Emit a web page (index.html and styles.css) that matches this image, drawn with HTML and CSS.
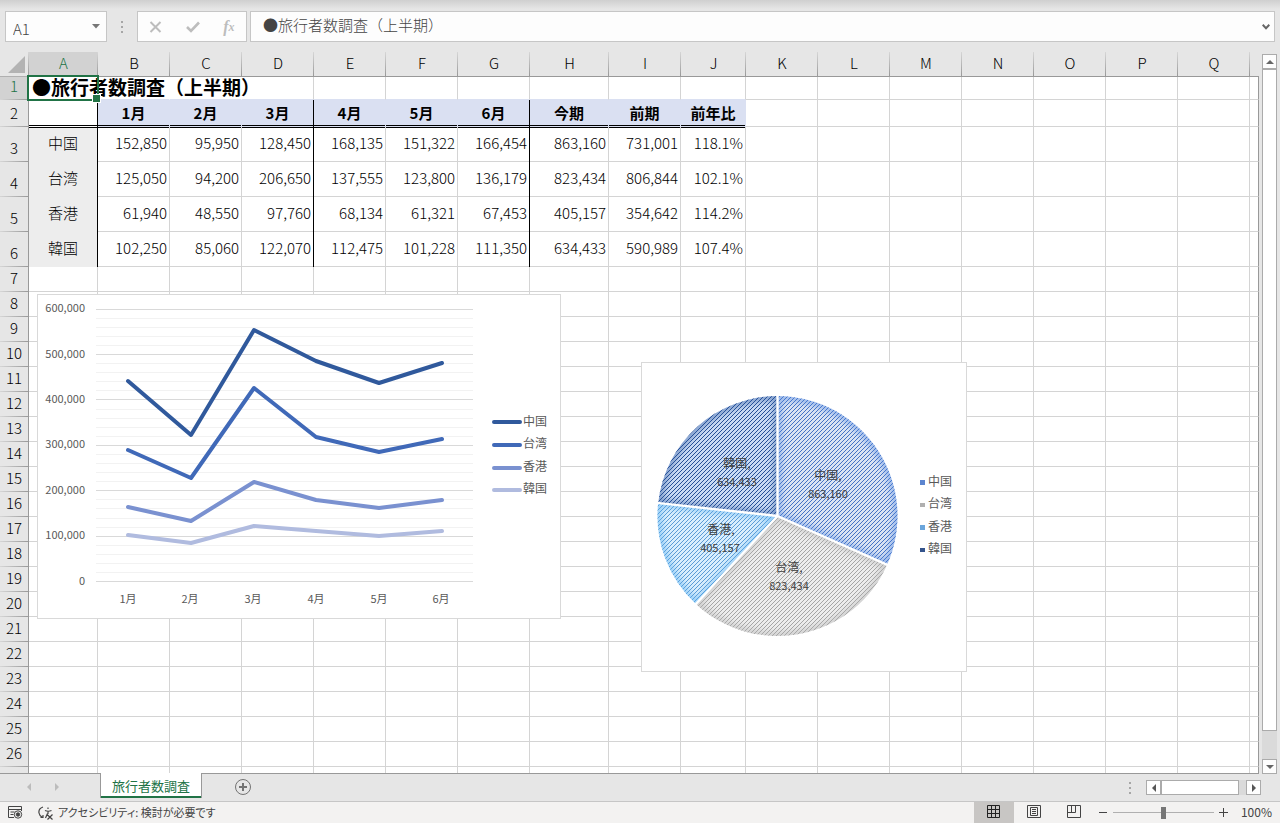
FILE: index.html
```html
<!DOCTYPE html>
<html lang="ja">
<head>
<meta charset="utf-8">
<title>旅行者数調査</title>
<link rel="stylesheet" href="styles.css">
</head>
<body>
<div class="app">
  <header class="formula-bar">
    <div class="name-box">
      <input class="name-input" type="text" value="A1" aria-label="名前ボックス">
      <button class="icon-button name-toggle" type="button" aria-label="名前の一覧">
        <svg width="8" height="5" viewBox="0 0 8 5"><path d="M0 0h8L4 4.500z" fill="#777"/></svg>
      </button>
    </div>
    <svg class="grip" width="3" height="12" viewBox="0 0 3 12" fill="#a6a6a6"><path d="M0 0h2v2H0zM0 5h2v2H0zM0 10h2v2H0z"/></svg>
    <div class="edit-tools">
      <button class="icon-button" type="button" aria-label="キャンセル">
        <svg width="14" height="12" viewBox="0 0 14 12" fill="none" stroke="#bdbdbd" stroke-width="2"><path d="M1.500 1l10 10M11.500 1l-10 10"/></svg>
      </button>
      <button class="icon-button" type="button" aria-label="入力">
        <svg width="14" height="12" viewBox="0 0 14 12" fill="none" stroke="#bdbdbd" stroke-width="2.600"><path d="M1 6l4 4 8-8.500"/></svg>
      </button>
      <button class="icon-button fx" type="button" aria-label="関数の挿入"><i>f</i><small>x</small></button>
    </div>
    <div class="formula">
      <input class="formula-input" type="text" value="●旅行者数調査（上半期）" aria-label="数式バー">
      <button class="icon-button expand" type="button" aria-label="数式バーの展開">
        <svg width="8" height="6" viewBox="0 0 8 6" fill="none" stroke="#666" stroke-width="2"><path d="M.7.800L4 4.200 7.300.800"/></svg>
      </button>
    </div>
  </header>

  <main class="workspace">
    <div class="sheet" id="sheet">
      <table class="grid" id="grid">
        <colgroup>
          <col class="c-head"><col class="c-a">
          <col class="c-std"><col class="c-std"><col class="c-std"><col class="c-std"><col class="c-std"><col class="c-std">
          <col class="c-h"><col class="c-std"><col class="c-j">
          <col class="c-std"><col class="c-std"><col class="c-std"><col class="c-std"><col class="c-std"><col class="c-std"><col class="c-std">
          <col>
        </colgroup>
        <thead></thead>
        <tbody></tbody>
      </table>

      <svg class="chart line-chart" viewBox="37 294 524 325" role="img" aria-label="月別旅行者数の折れ線グラフ">
        <rect x="37.500" y="294.500" width="523" height="324" fill="#fff" stroke="#d9d9d9"/>
        <path class="minor" d="M96 318.500h377M96 327.500h377M96 336.500h377M96 345.500h377M96 363.500h377M96 372.500h377M96 381.500h377M96 390.500h377M96 409.500h377M96 418.500h377M96 427.500h377M96 436.500h377M96 454.500h377M96 463.500h377M96 472.500h377M96 481.500h377M96 499.500h377M96 508.500h377M96 518.500h377M96 527.500h377M96 545.500h377M96 554.500h377M96 563.500h377M96 572.500h377"/>
        <path class="major" d="M96 309.500h377M96 354.500h377M96 399.500h377M96 445.500h377M96 490.500h377M96 536.500h377M96 581.500h377"/>
        <g class="axis end">
          <text x="85" y="312">600,000</text><text x="85" y="358">500,000</text><text x="85" y="403">400,000</text><text x="85" y="448">300,000</text><text x="85" y="494">200,000</text><text x="85" y="539">100,000</text><text x="85" y="585">0</text>
        </g>
        <g class="axis mid">
          <text x="128" y="603">1月</text><text x="190" y="603">2月</text><text x="253" y="603">3月</text><text x="316" y="603">4月</text><text x="379" y="603">5月</text><text x="441" y="603">6月</text>
        </g>
        <g class="series">
          <path stroke="#b0bbdf" d="M128 535l63 8 63-17 62 5 63 5 63-5M494 490h26"/>
          <path stroke="#7a91d0" d="M128 507l63 14 63-39 62 18 63 8 63-8M494 468h26"/>
          <path stroke="#4069b8" d="M128 450l63 28 63-90 62 49 63 15 63-13M494 445h26"/>
          <path stroke="#30599c" d="M128 381l63 54 63-105 62 31 63 22 63-20M494 422h26"/>
        </g>
        <g class="legend">
          <text x="523" y="426">中国</text><text x="523" y="448">台湾</text><text x="523" y="471">香港</text><text x="523" y="493">韓国</text>
        </g>
      </svg>

      <svg class="chart pie-chart" viewBox="641 362 326 310" role="img" aria-label="国別旅行者数の円グラフ">
        <defs>
          <pattern id="h1" width="4" height="4" patternUnits="userSpaceOnUse"><path d="M0 0h4v4H0z" fill="#dae3f3"/><path d="M-1 1l2-2M0 4l4-4M3 5l2-2" stroke="#4472c4"/></pattern>
          <pattern id="h2" width="4" height="4" patternUnits="userSpaceOnUse"><path d="M0 0h4v4H0z" fill="#ededed"/><path d="M-1 1l2-2M0 4l4-4M3 5l2-2" stroke="#a5a5a5"/></pattern>
          <pattern id="h3" width="4" height="4" patternUnits="userSpaceOnUse"><path d="M0 0h4v4H0z" fill="#d9eefd"/><path d="M-1 1l2-2M0 4l4-4M3 5l2-2" stroke="#5b9bd5"/></pattern>
          <pattern id="h4" width="4" height="4" patternUnits="userSpaceOnUse"><path d="M0 0h4v4H0z" fill="#c9daf4"/><path d="M-1 1l2-2M0 4l4-4M3 5l2-2" stroke="#264f96"/></pattern>
          <path id="s1" d="M777.500 516V396A120 120 0 0 1 887.100 564.800z"/>
          <path id="s2" d="M777.500 516L887.100 564.800A120 120 0 0 1 696.100 604.200z"/>
          <path id="s3" d="M777.500 516L696.100 604.200A120 120 0 0 1 658.200 503z"/>
          <path id="s4" d="M777.500 516L658.200 503A120 120 0 0 1 777.500 396z"/>
          <clipPath id="k1"><use href="#s1"/></clipPath>
          <clipPath id="k2"><use href="#s2"/></clipPath>
          <clipPath id="k3"><use href="#s3"/></clipPath>
          <clipPath id="k4"><use href="#s4"/></clipPath>
          <filter id="soft" color-interpolation-filters="sRGB"><feGaussianBlur stdDeviation="3"/></filter>
        </defs>
        <rect x="641.500" y="362.500" width="325" height="309" fill="#fff" stroke="#d9d9d9"/>
        <use href="#s1" fill="url(#h1)"/><use href="#s2" fill="url(#h2)"/><use href="#s3" fill="url(#h3)"/><use href="#s4" fill="url(#h4)"/>
        <g class="inner-shade">
          <g clip-path="url(#k1)"><use href="#s1" stroke="#4f86e0" filter="url(#soft)"/></g>
          <g clip-path="url(#k2)"><use href="#s2" stroke="#b0b0b0" filter="url(#soft)"/></g>
          <g clip-path="url(#k3)"><use href="#s3" stroke="#55aef0" filter="url(#soft)"/></g>
          <g clip-path="url(#k4)"><use href="#s4" stroke="#2f5aa0" filter="url(#soft)"/></g>
        </g>
        <path d="M777.500 395V516L888.500 565.300M777.500 516L695 605M777.500 516L657 502.900" fill="none" stroke="#fff" stroke-width="2.400"/>
        <g class="legend mid pie-label">
          <text x="828" y="480">中国,</text><text x="789" y="572">台湾,</text><text x="721" y="534">香港,</text><text x="737" y="468">韓国,</text>
        </g>
        <g class="axis mid pie-label">
          <text x="828" y="498">863,160</text><text x="789" y="590">823,434</text><text x="720" y="552">405,157</text><text x="737" y="486">634,433</text>
        </g>
        <g>
          <path d="M920 480h5v5h-5z" fill="#5c85cf"/><path d="M920 503h5v4h-5z" fill="#b0b0b0"/><path d="M920 525h5v5h-5z" fill="#6ba6dc"/><path d="M920 548h5v4h-5z" fill="#34548c"/>
        </g>
        <g class="legend">
          <text x="928" y="486">中国</text><text x="928" y="508">台湾</text><text x="928" y="531">香港</text><text x="928" y="553">韓国</text>
        </g>
      </svg>
    </div>

    <div class="vscroll">
      <button class="scroll-button" type="button" aria-label="上へ"><svg width="8" height="4" viewBox="0 0 8 4"><path d="M0 4h8L4 0z" fill="#666"/></svg></button>
      <div class="vtrack"><div class="vthumb"></div></div>
      <button class="scroll-button" type="button" aria-label="下へ"><svg width="8" height="4" viewBox="0 0 8 4"><path d="M0 0h8L4 4z" fill="#666"/></svg></button>
    </div>
  </main>

  <nav class="tab-bar">
    <div class="tab-nav">
      <button class="icon-button" type="button" aria-label="前のシート"><svg width="4" height="8" viewBox="0 0 4 8"><path d="M4 0v8L0 4z" fill="#bcbcbc"/></svg></button>
      <button class="icon-button" type="button" aria-label="次のシート"><svg width="4" height="8" viewBox="0 0 4 8"><path d="M0 0v8l4-4z" fill="#bcbcbc"/></svg></button>
    </div>
    <button class="sheet-tab" type="button">旅行者数調査</button>
    <button class="icon-button add-sheet" type="button" aria-label="新しいシート">
      <svg width="18" height="18" viewBox="0 0 18 18" fill="none" stroke="#737373"><circle cx="9" cy="9" r="7.500"/><path d="M9 5v8M5 9h8" stroke-width="2"/></svg>
    </button>
    <svg class="grip" width="3" height="12" viewBox="0 0 3 12" fill="#a6a6a6"><path d="M0 0h2v2H0zM0 5h2v2H0zM0 10h2v2H0z"/></svg>
    <div class="hscroll">
      <button class="scroll-button" type="button" aria-label="左へ"><svg width="4" height="8" viewBox="0 0 4 8"><path d="M4 0v8L0 4z" fill="#555"/></svg></button>
      <div class="htrack"><div class="hthumb"></div></div>
      <button class="scroll-button" type="button" aria-label="右へ"><svg width="4" height="8" viewBox="0 0 4 8"><path d="M0 0v8l4-4z" fill="#555"/></svg></button>
    </div>
  </nav>

  <footer class="status-bar">
    <button class="icon-button macro" type="button" aria-label="マクロの記録">
      <svg width="15" height="13" viewBox="0 0 15 13" fill="none" stroke="#444"><path d="M6 11.500H.5V.5h13V5M.5 3.500h13M2.500 6h4M2.500 8.500h3"/><circle cx="10" cy="8.500" r="3.700"/><circle cx="10" cy="8.500" r="1.700" fill="#444"/></svg>
    </button>
    <button class="a11y" type="button">
      <svg width="16" height="14" viewBox="0 0 16 14" fill="none" stroke="#444"><path d="M5 1C2 2 .5 4 1 7c.3 2 1.500 3.500 3.500 4.500M2.500 11.500h2.500V9M7 4.500c1.500.7 5 .7 6.500 0M10 1.500v1.500M10 5v3M9.500 7.500L7.500 12M9 8.500l5.500 5M14.500 8.500l-5 5" stroke-width="1.200"/></svg>
      <span>アクセシビリティ: 検討が必要です</span>
    </button>
    <div class="views">
      <button class="view active" type="button" aria-label="標準"><svg width="13" height="13" viewBox="0 0 13 13" fill="none" stroke="#222"><path d="M.5.500h12v12H.5zM4.500.500v12M8.500.500v12M.5 4.500h12M.5 8.500h12"/></svg></button>
      <button class="view" type="button" aria-label="ページ レイアウト"><svg width="14" height="13" viewBox="0 0 14 13" fill="none" stroke="#444"><path d="M.5.500h13v12H.5zM3.500 2.500h7v8h-7zM5 4.500h4M5 6.500h4M5 8.500h4"/></svg></button>
      <button class="view" type="button" aria-label="改ページ プレビュー"><svg width="14" height="13" viewBox="0 0 14 13" fill="none" stroke="#444"><path d="M.5.500h13v12H.5zM.5 7.500h8v-7M4.500.500v7"/></svg></button>
    </div>
    <div class="zoom">
      <button class="icon-button" type="button" aria-label="縮小"><svg width="9" height="9" viewBox="0 0 9 9" stroke="#444"><path d="M0 4.500h8"/></svg></button>
      <input class="zoom-slider" type="range" min="0" max="200" value="100" aria-label="ズーム">
      <button class="icon-button" type="button" aria-label="拡大"><svg width="9" height="9" viewBox="0 0 9 9" stroke="#444"><path d="M0 4.500h9M4.500 0v9"/></svg></button>
      <button class="percent" type="button">100%</button>
    </div>
  </footer>
</div>
<script src="sheet.js"></script>
</body>
</html>
```

FILE: styles.css
```css
* {
  box-sizing: border-box;
}

body {
  margin: 0;
  font-family: "Noto Sans CJK JP", sans-serif;
  font-size: 15px;
  font-weight: 300;
  color: #000;
  background: #e6e6e6;
}

button,
input {
  font: inherit;
  color: inherit;
  margin: 0;
  padding: 0;
  border: 0;
  background: none;
  min-width: 0;
}

svg {
  display: block;
}

.app {
  display: flex;
  flex-direction: column;
  height: 100vh;
}

.icon-button {
  display: flex;
  align-items: center;
  justify-content: center;
}

/* formula bar */
.formula-bar {
  display: flex;
  flex: none;
  height: 52px;
  padding: 11px 5px 10px;
  background: linear-gradient(#cfcfcf, #e6e6e6 9px);
  color: #444;
}

.name-box,
.edit-tools,
.formula {
  display: flex;
  background: #fdfdfd;
  border: 1px solid #c6c6c6;
}

.name-box {
  width: 102px;
}

.name-input {
  flex: 1;
  padding: 3px 0 0 7px;
}

.name-toggle {
  width: 20px;
}

.formula-bar .grip {
  margin: 10px 13px 0 14px;
}

.edit-tools {
  width: 110px;
  justify-content: space-around;
}

.fx {
  font-family: "Liberation Serif", serif;
  font-size: 16px;
  font-weight: 700;
  line-height: 16px;
  color: #bdbdbd;
}

.fx small {
  font-size: 12px;
  font-style: italic;
}

.formula {
  flex: 1;
  margin-left: 3px;
}

.formula-input {
  flex: 1;
  padding: 0 0 4px 12px;
}

.expand {
  width: 16px;
}

/* sheet */
.workspace {
  display: flex;
  flex: 1;
  min-height: 0;
}

.sheet {
  position: relative;
  flex: 1;
  overflow: hidden;
  border-bottom: 1px solid #999;
}

.grid {
  width: 100%;
  table-layout: fixed;
  border-spacing: 0;
  line-height: 20px;
}

.c-head { width: 29px; }
.c-a { width: 69px; }
.c-std { width: 72px; }
.c-h { width: 79px; }
.c-j { width: 65px; }

.grid th,
.grid td {
  height: 25px;
  padding: 0;
  white-space: nowrap;
}

.grid th {
  font-weight: 300;
  background: #e6e6e6;
}

.grid thead th {
  padding-bottom: 2px;
  border-bottom: 1px solid #999;
  background: linear-gradient(#d6d6d6, #999) right / 1px 100% no-repeat #e6e6e6;
}

.grid thead th:last-child {
  background: #e6e6e6;
}

.grid thead .corner {
  padding: 4px 0 0 8px;
  border-bottom-color: #b0b0b0;
  vertical-align: top;
}

.grid thead .current,
.grid tbody .current {
  color: #217346;
  background-color: #d2d2d2;
}

.grid tbody th {
  padding-bottom: 5px;
  border-right: 1px solid #999;
  background: linear-gradient(90deg, #d6d6d6, #999) bottom / 100% 1px no-repeat #e6e6e6;
  line-height: 18px;
  vertical-align: bottom;
}

.grid td {
  padding: 0 2px 2px 0;
  background: #fff;
  border-right: 1px solid #d4d4d4;
  border-bottom: 1px solid #d4d4d4;
  text-align: right;
}

.grid td:last-child {
  border-right-color: #999;
}

.grid .r1 > * { height: 23px; }
.grid .r2 > * { height: 27px; }
.grid .data > * { height: 35px; }

.grid .under-title {
  border-right-color: #fff;
}

.grid .above-header {
  border-bottom-color: #dae0f2;
}

.grid .title {
  position: relative;
  z-index: 1;
  padding-left: 3px;
  font-size: 19px;
  font-weight: 700;
  text-align: left;
}

.selection {
  position: absolute;
  inset: -2px;
  border: 2px solid #217346;
}

.selection::after {
  content: "";
  position: absolute;
  right: -4px;
  bottom: -4px;
  width: 7px;
  height: 7px;
  border: 1px solid #fff;
  background: #217346;
}

.grid .month {
  padding: 0;
  font-weight: 700;
  text-align: center;
  background: #dae0f2;
  border-color: #dae0f2;
  box-shadow: inset 0 -1px #000;
}

.grid .blank {
  background: #fff;
  border-color: #fff;
  box-shadow: inset 0 -1px #000;
}

.grid .country {
  padding: 0 0 2px;
  text-align: center;
  background: #ededed;
  border-bottom-color: #ededed;
}

.grid .ruled {
  box-shadow: inset 0 1px #000;
}

.grid .divider {
  position: relative;
}

.divider::after {
  content: "";
  position: absolute;
  top: 0;
  right: -1px;
  bottom: -1px;
  width: 1px;
  background: #000;
}

/* charts */
.chart {
  position: absolute;
  z-index: 2;
}

.line-chart {
  left: 37px;
  top: 242px;
  width: 524px;
  height: 325px;
}

.pie-chart {
  left: 641px;
  top: 310px;
  width: 326px;
  height: 310px;
}

.minor { stroke: #f2f2f2; }
.major { stroke: #d9d9d9; }

.series {
  fill: none;
  stroke-width: 4px;
  stroke-linecap: round;
  stroke-linejoin: round;
}

.axis,
.legend {
  font-size: 11px;
  font-weight: 400;
  fill: #595959;
}

.legend { font-size: 12px; }
.pie-label { fill: #404040; }
.end { text-anchor: end; }
.mid { text-anchor: middle; }

.inner-shade {
  fill: none;
  stroke-width: 8px;
  opacity: 0.5;
}

/* scroll bars */
.vscroll {
  display: flex;
  flex-direction: column;
  width: 15px;
  margin: 2px 3px 0 3px;
}

.scroll-button {
  display: flex;
  flex: none;
  align-items: center;
  justify-content: center;
  width: 15px;
  height: 15px;
  background: #fdfdfd;
  border: 1px solid #ababab;
}

.vtrack {
  display: flex;
  flex-direction: column;
  flex: 1;
  background: #dadada;
}

.vthumb {
  height: 96%;
  background: #fff;
  border: 1px solid #ababab;
}

.hscroll {
  display: flex;
  margin: 6px 19px 0 14px;
}

.htrack {
  width: 85px;
  background: #dadada;
}

.hthumb {
  width: 78px;
  height: 15px;
  background: #fff;
  border: 1px solid #ababab;
}

/* sheet tabs */
.tab-bar {
  display: flex;
  flex: none;
  align-items: flex-start;
  height: 28px;
  border-bottom: 1px solid #c6c6c6;
}

.tab-nav {
  display: flex;
  gap: 24px;
  width: 100px;
  padding: 9px 0 0 27px;
}

.sheet-tab {
  position: relative;
  height: 25px;
  margin-top: -1px;
  padding: 0 11px;
  font-size: 13px;
  font-weight: 400;
  line-height: 20px;
  color: #217346;
  background: #fff;
  border: solid #999;
  border-width: 0 1px;
  box-shadow: inset 0 -2px #217346;
}

.add-sheet {
  margin: 4px auto 0 32px;
}

.tab-bar .grip {
  margin-top: 8px;
}

/* status bar */
.status-bar {
  display: flex;
  flex: none;
  align-items: center;
  height: 21px;
  padding: 0 8px;
  font-size: 12px;
  font-weight: 400;
  line-height: 18px;
  color: #444;
  background: #f3f2f1;
}

.a11y {
  display: flex;
  align-items: center;
  gap: 4px;
  margin: 0 auto 0 15px;
  font-size: 11px;
  font-feature-settings: "palt";
  white-space: nowrap;
}

.a11y span,
.percent {
  padding-bottom: 2px;
}

.views {
  display: flex;
  height: 100%;
}

.view {
  display: flex;
  align-items: center;
  justify-content: center;
  width: 40px;
  padding-bottom: 2px;
}

.view.active {
  background: #c8c6c4;
}

.zoom {
  display: flex;
  align-items: center;
  gap: 5px;
  margin-left: 5px;
}

.zoom-slider {
  width: 101px;
  height: 12px;
  appearance: none;
}

.zoom-slider::-webkit-slider-runnable-track {
  height: 12px;
  background: linear-gradient(#b0b0b0, #b0b0b0) center / 100% 1px no-repeat;
}

.zoom-slider::-webkit-slider-thumb {
  appearance: none;
  width: 5px;
  height: 12px;
  background: #767676;
}

.percent {
  margin-left: 8px;
}
```

FILE: sheet.js
```js
const columns = "ABCDEFGHIJKLMNOPQ".split("");
const months = ["", "1月", "2月", "3月", "4月", "5月", "6月", "今期", "前期", "前年比"];
const data = [
  ["中国", "152,850", "95,950", "128,450", "168,135", "151,322", "166,454", "863,160", "731,001", "118.1%"],
  ["台湾", "125,050", "94,200", "206,650", "137,555", "123,800", "136,179", "823,434", "806,844", "102.1%"],
  ["香港", "61,940", "48,550", "97,760", "68,134", "61,321", "67,453", "405,157", "354,642", "114.2%"],
  ["韓国", "102,250", "85,060", "122,070", "112,475", "101,228", "111,350", "634,433", "590,989", "107.4%"]
];
const dividers = [0, 3, 6];

function cell(tag, className, text) {
  const el = document.createElement(tag);
  if (className) el.className = className;
  if (text) el.textContent = text;
  return el;
}

const sheet = document.getElementById("sheet");
const grid = document.getElementById("grid");

const head = grid.tHead.insertRow();
const corner = cell("th", "corner");
corner.innerHTML = '<svg width="17" height="17" viewBox="0 0 17 17"><path d="M17 0v17H0z" fill="#b3b3b3"/></svg>';
head.append(corner);
columns.forEach((name, i) => head.append(cell("th", i === 0 ? "current" : "", name)));
head.append(cell("th"));

function addRow(r) {
  const row = grid.tBodies[0].insertRow();
  const record = data[r - 3];
  row.className = record ? "data" : "r" + r;
  row.append(cell("th", r === 1 ? "current" : "", String(r)));

  for (let c = 0; c <= columns.length; c++) {
    const inTable = c < months.length;
    const names = [];
    let text = "";
    if (r === 1 && c === 0) {
      names.push("title");
      text = "●旅行者数調査（上半期）";
    } else if (r === 1 && inTable) {
      names.push("above-header");
      if (c < 3) names.push("under-title");
    } else if (r === 2 && inTable) {
      names.push(c === 0 ? "blank" : "month");
      text = months[c];
    } else if (record && inTable) {
      text = record[c];
      if (c === 0) names.push("country");
      if (r === 3) names.push("ruled");
    }
    if (r >= 2 && r <= 6 && dividers.includes(c)) names.push("divider");
    const td = cell("td", names.join(" "), text);
    if (r === 1 && c === 0) td.append(cell("span", "selection"));
    row.append(td);
  }
  return row;
}

// Fill the visible area; a row that is cut by the bottom edge gets no number.
let r = 1;
let last = addRow(r);
while (grid.offsetHeight < sheet.clientHeight) last = addRow(++r);
if (grid.offsetHeight > sheet.clientHeight) last.cells[0].textContent = "";
```
